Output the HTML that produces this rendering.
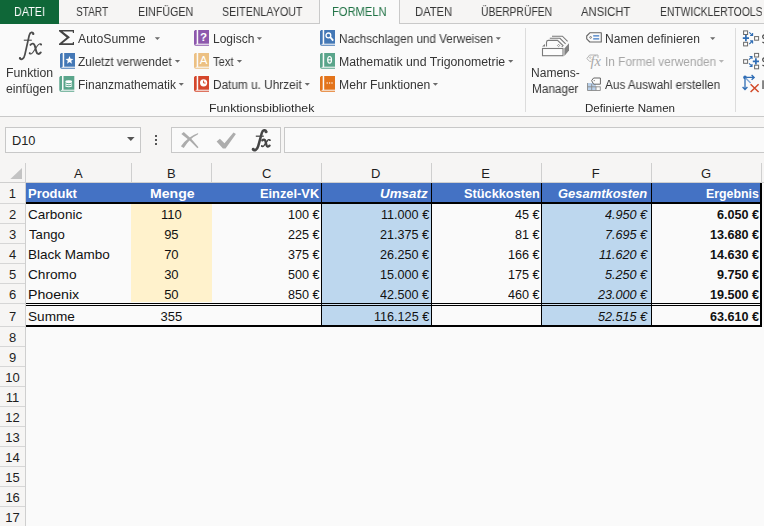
<!DOCTYPE html>
<html><head><meta charset="utf-8"><title>Excel</title>
<style>
html,body{margin:0;padding:0;}
body{width:764px;height:526px;overflow:hidden;background:#f6f5f4;position:relative;font-family:"Liberation Sans",sans-serif;}
.b{position:absolute;}
.t{position:absolute;white-space:nowrap;transform-origin:0 0;}
svg{position:absolute;left:0;top:0;}
</style></head><body>
<div class="b" style="left:0px;top:0px;width:764px;height:23px;background:#f6f5f4;"></div>
<div class="b" style="left:0px;top:23px;width:764px;height:1px;background:#c9c9c9;"></div>
<div class="b" style="left:0px;top:24px;width:764px;height:92px;background:#fafafa;"></div>
<div class="b" style="left:0px;top:116px;width:764px;height:1px;background:#c9c9c9;"></div>
<div class="b" style="left:0px;top:0px;width:59px;height:24px;background:#0f6738;"></div>
<div class="b" style="left:319px;top:0px;width:81px;height:24px;background:#fafafa;border-left:1px solid #c9c9c9;border-right:1px solid #c9c9c9;box-sizing:border-box;"></div>
<div class="b" style="left:525px;top:28px;width:1px;height:84px;background:#dcdcdc;"></div>
<div class="b" style="left:735px;top:28px;width:1px;height:84px;background:#dcdcdc;"></div>
<div class="b" style="left:5px;top:127px;width:136px;height:26px;background:#fafafa;border:1px solid #c8c8c8;box-sizing:border-box;"></div>
<div class="b" style="left:171px;top:127px;width:110px;height:26px;background:#fafafa;border:1px solid #c8c8c8;box-sizing:border-box;"></div>
<div class="b" style="left:284px;top:127px;width:490px;height:26px;background:#fafafa;border:1px solid #c8c8c8;box-sizing:border-box;"></div>
<div class="b" style="left:155px;top:135px;width:2px;height:2px;background:#555;"></div>
<div class="b" style="left:155px;top:139px;width:2px;height:2px;background:#555;"></div>
<div class="b" style="left:155px;top:143px;width:2px;height:2px;background:#555;"></div>
<div class="b" style="left:26px;top:183px;width:738px;height:343px;background:#fafafa;"></div>
<div class="b" style="left:25px;top:163px;width:1px;height:20px;background:#cfcfcf;"></div>
<div class="b" style="left:131px;top:163px;width:1px;height:20px;background:#cfcfcf;"></div>
<div class="b" style="left:211px;top:163px;width:1px;height:20px;background:#cfcfcf;"></div>
<div class="b" style="left:321px;top:163px;width:1px;height:20px;background:#cfcfcf;"></div>
<div class="b" style="left:431px;top:163px;width:1px;height:20px;background:#cfcfcf;"></div>
<div class="b" style="left:541px;top:163px;width:1px;height:20px;background:#cfcfcf;"></div>
<div class="b" style="left:651px;top:163px;width:1px;height:20px;background:#cfcfcf;"></div>
<div class="b" style="left:761px;top:163px;width:1px;height:20px;background:#cfcfcf;"></div>
<div class="b" style="left:0px;top:182px;width:764px;height:1px;background:#cfcfcf;"></div>
<div class="b" style="left:25px;top:183px;width:1px;height:343px;background:#cfcfcf;"></div>
<div class="b" style="left:0px;top:203px;width:25px;height:1px;background:#d6d6d6;"></div>
<div class="b" style="left:0px;top:223px;width:25px;height:1px;background:#d6d6d6;"></div>
<div class="b" style="left:0px;top:243px;width:25px;height:1px;background:#d6d6d6;"></div>
<div class="b" style="left:0px;top:263px;width:25px;height:1px;background:#d6d6d6;"></div>
<div class="b" style="left:0px;top:283px;width:25px;height:1px;background:#d6d6d6;"></div>
<div class="b" style="left:0px;top:303px;width:25px;height:1px;background:#d6d6d6;"></div>
<div class="b" style="left:0px;top:326px;width:25px;height:1px;background:#d6d6d6;"></div>
<div class="b" style="left:0px;top:346px;width:25px;height:1px;background:#d6d6d6;"></div>
<div class="b" style="left:0px;top:366px;width:25px;height:1px;background:#d6d6d6;"></div>
<div class="b" style="left:0px;top:386px;width:25px;height:1px;background:#d6d6d6;"></div>
<div class="b" style="left:0px;top:406px;width:25px;height:1px;background:#d6d6d6;"></div>
<div class="b" style="left:0px;top:426px;width:25px;height:1px;background:#d6d6d6;"></div>
<div class="b" style="left:0px;top:446px;width:25px;height:1px;background:#d6d6d6;"></div>
<div class="b" style="left:0px;top:466px;width:25px;height:1px;background:#d6d6d6;"></div>
<div class="b" style="left:0px;top:486px;width:25px;height:1px;background:#d6d6d6;"></div>
<div class="b" style="left:0px;top:506px;width:25px;height:1px;background:#d6d6d6;"></div>
<div class="b" style="left:0px;top:526px;width:25px;height:1px;background:#d6d6d6;"></div>
<div class="b" style="left:26px;top:183px;width:734px;height:19px;background:#4472c4;"></div>
<div class="b" style="left:131px;top:204px;width:81px;height:98px;background:#fff2cc;"></div>
<div class="b" style="left:321px;top:204px;width:110px;height:121px;background:#bdd7ee;"></div>
<div class="b" style="left:541px;top:204px;width:110px;height:121px;background:#bdd7ee;"></div>
<div class="b" style="left:26px;top:202px;width:736px;height:2px;background:#000;"></div>
<div class="b" style="left:26px;top:302.8px;width:736px;height:1px;background:#000;"></div>
<div class="b" style="left:26px;top:303.8px;width:736px;height:1.2px;background:#fafafa;"></div>
<div class="b" style="left:322px;top:303.8px;width:109px;height:1.2px;background:#cde0f2;"></div>
<div class="b" style="left:542px;top:303.8px;width:109px;height:1.2px;background:#cde0f2;"></div>
<div class="b" style="left:26px;top:305px;width:736px;height:1px;background:#000;"></div>
<div class="b" style="left:26px;top:325px;width:736px;height:2px;background:#000;"></div>
<div class="b" style="left:321px;top:183px;width:1px;height:143px;background:#000;"></div>
<div class="b" style="left:431px;top:183px;width:1px;height:143px;background:#000;"></div>
<div class="b" style="left:541px;top:183px;width:1px;height:143px;background:#000;"></div>
<div class="b" style="left:651px;top:183px;width:1px;height:143px;background:#000;"></div>
<div class="b" style="left:760px;top:183px;width:2px;height:144px;background:#000;"></div>
<svg width="764" height="526" viewBox="0 0 764 526">
<path fill="#444" d="M59 30H74V33H72.8V31.4H62.6L70 37.3L62.6 43.3H72.8V42H74V45H59V43.7L66.6 37.4L59 31.2Z"/>
<path fill="#6a6a6a" d="M154.8 37.2h5.2l-2.6 2.8z"/>
<path fill="#6a6a6a" d="M174.9 60h5.2l-2.6 2.8z"/>
<path fill="#6a6a6a" d="M178.7 83h5.2l-2.6 2.8z"/>
<path fill="#6a6a6a" d="M256.8 37.2h5.2l-2.6 2.8z"/>
<path fill="#6a6a6a" d="M236.9 60h5.2l-2.6 2.8z"/>
<path fill="#6a6a6a" d="M304.7 83h5.2l-2.6 2.8z"/>
<path fill="#6a6a6a" d="M495.7 37.2h5.2l-2.6 2.8z"/>
<path fill="#6a6a6a" d="M508.1 60h5.2l-2.6 2.8z"/>
<path fill="#6a6a6a" d="M432.8 83h5.2l-2.6 2.8z"/>
<path fill="#6a6a6a" d="M710.1 37.2h5.2l-2.6 2.8z"/>
<path fill="#b5b5b5" d="M718.8 60h5.2l-2.6 2.8z"/>
<path fill="#555" d="M127 137h7.6l-3.8 3.9z"/>
<g transform="translate(60 53)">
<path fill="#4478b6" d="M0 1.2L1.1 0H2.7V13.8Q1.4 13.9 1.4 14.8H15V15.8H1.7Q0 15.7 0 13.8Z"/>
<rect fill="#4478b6" x="4.2" y="0" width="10.8" height="13.7"/>
<path fill="#fff" d="M9.5 3.1l1.05 2.75 2.95.15-2.3 1.85.78 2.85L9.5 9.1l-2.48 1.6.78-2.85L5.5 6l2.95-.15z"/>
</g>
<g transform="translate(59.3 76)">
<path fill="#5aa58b" d="M0 1.2L1.1 0H2.7V13.8Q1.4 13.9 1.4 14.8H15V15.8H1.7Q0 15.7 0 13.8Z"/>
<rect fill="#5aa58b" x="4.2" y="0" width="10.8" height="13.7"/>
<ellipse fill="#fff" cx="9.4" cy="5.7" rx="3.4" ry="1.45"/><path fill="none" stroke="#fff" stroke-width="1.1" d="M6 7.7q3.4 2.1 6.8 0M6 9.7q3.4 2.1 6.8 0"/>
</g>
<g transform="translate(194 30)">
<path fill="#8d58ad" d="M0 1.2L1.1 0H2.7V13.8Q1.4 13.9 1.4 14.8H15V15.8H1.7Q0 15.7 0 13.8Z"/>
<rect fill="#8d58ad" x="4.2" y="0" width="10.8" height="13.7"/>
<text x="9.6" y="11" font-family="Liberation Sans" font-weight="bold" font-size="11.5" fill="#fff" text-anchor="middle">?</text>
</g>
<g transform="translate(194 53)">
<path fill="#ecc083" d="M0 1.2L1.1 0H2.7V13.8Q1.4 13.9 1.4 14.8H15V15.8H1.7Q0 15.7 0 13.8Z"/>
<rect fill="#ecc083" x="4.2" y="0" width="10.8" height="13.7"/>
<text x="9.6" y="11" font-family="Liberation Sans" font-size="11.5" fill="#fff" text-anchor="middle">A</text>
</g>
<g transform="translate(194 76)">
<path fill="#d5472c" d="M0 1.2L1.1 0H2.7V13.8Q1.4 13.9 1.4 14.8H15V15.8H1.7Q0 15.7 0 13.8Z"/>
<rect fill="#d5472c" x="4.2" y="0" width="10.8" height="13.7"/>
<circle fill="#fff" cx="9.6" cy="6.8" r="3.6"/><path fill="none" stroke="#d24a2a" stroke-width="1" d="M9.6 4.6V7H11.6"/>
</g>
<g transform="translate(320 30)">
<path fill="#4478b6" d="M0 1.2L1.1 0H2.7V13.8Q1.4 13.9 1.4 14.8H15V15.8H1.7Q0 15.7 0 13.8Z"/>
<rect fill="#4478b6" x="4.2" y="0" width="10.8" height="13.7"/>
<circle cx="8.4" cy="5.4" r="2.4" fill="none" stroke="#fff" stroke-width="1.3"/><path stroke="#fff" stroke-width="1.8" d="M10.2 7.2L13.2 10.6"/>
</g>
<g transform="translate(320 53)">
<path fill="#5aa58b" d="M0 1.2L1.1 0H2.7V13.8Q1.4 13.9 1.4 14.8H15V15.8H1.7Q0 15.7 0 13.8Z"/>
<rect fill="#5aa58b" x="4.2" y="0" width="10.8" height="13.7"/>
<ellipse cx="9.6" cy="6.8" rx="1.9" ry="3.3" fill="none" stroke="#fff" stroke-width="1.2"/><path stroke="#fff" stroke-width="1.1" d="M7.8 6.8H11.4"/>
</g>
<g transform="translate(320 76)">
<path fill="#e3741b" d="M0 1.2L1.1 0H2.7V13.8Q1.4 13.9 1.4 14.8H15V15.8H1.7Q0 15.7 0 13.8Z"/>
<rect fill="#e3741b" x="4.2" y="0" width="10.8" height="13.7"/>
<rect fill="#fff" x="6.6" y="6.4" width="1.2" height="1.2"/><rect fill="#fff" x="9" y="6.4" width="1.2" height="1.2"/><rect fill="#fff" x="11.4" y="6.4" width="1.2" height="1.2"/>
</g>
<g fill="none" stroke="#7a7a7a" stroke-width="1.1">
<rect x="542.5" y="48.5" width="20.5" height="7.2" fill="#fdfdfd"/>
<path d="M546.5 46.6V42.2Q546.6 40.4 548.4 40.4H557.5L563 45.6L561.8 46.8"/>
<path d="M549.8 38.3H560L565.6 43.8"/>
<path d="M552 36.2H562.4L567.6 41.4"/>
<path d="M558.6 44.3L559.8 45.5L558.6 46.7L557.4 45.5Z" stroke-width="0.8"/>
</g>
<path fill="#828282" d="M564.4 48.6L569 43.2V50.4L564.4 56Z"/>
<path fill="#7a7a7a" d="M542 46.6L545 44V46.6Z"/>
<g fill="none" stroke="#666" stroke-width="1.1" stroke-linejoin="round">
<path d="M586.7 36L589.8 32.8H601.3V42H589.8L586.7 38.8Z"/>
<circle cx="590.6" cy="37.4" r="0.9" stroke-width="0.8"/>
</g>
<path stroke="#3c78c3" stroke-width="1.1" d="M593.2 35.9H599.2M593.2 38.9H599.2"/>
<g fill="none" stroke="#b4b4b4" stroke-width="1" stroke-linejoin="round">
<path d="M591.5 61.3H589.6L586.8 58.6L589.6 55H598V58"/>
<circle cx="590.2" cy="57.6" r="0.8" stroke-width="0.7"/>
</g>
<text x="590.6" y="65.6" font-family="Liberation Serif" font-style="italic" font-size="14.5" fill="#a8a8a8">fx</text>
<rect x="587.5" y="83" width="8.4" height="7.5" fill="#b9d0ea"/>
<path fill="none" stroke="#8a8a8a" stroke-width="0.9" d="M587.5 83V90.5H600.3V86.6M587.5 86.8H600.3M591.7 84V90.5M596 86.6V90.5"/>
<path fill="#fdfdfd" stroke="#666" stroke-width="1" stroke-linejoin="round" d="M591.6 80.6L593.6 78H600.4V84.2H593.6Z"/>
<circle cx="594.2" cy="80.6" r="0.6" fill="#666"/>
<rect x="743.6" y="30.9" width="4" height="3.6" fill="#fdfdfd" stroke="#6a6a6a" stroke-width="1"/>
<rect x="743.6" y="42.3" width="4" height="3.6" fill="#fdfdfd" stroke="#6a6a6a" stroke-width="1"/>
<rect x="754.6" y="36.6" width="4" height="3.6" fill="#fdfdfd" stroke="#6a6a6a" stroke-width="1"/>
<path stroke="#2f6db5" stroke-width="1.7" d="M742.8 38.2H749M745.9 35.1V41.3"/>
<path fill="none" stroke="#2f6db5" stroke-width="1.1" d="M749.3 32.4L752.4 35.3M752.6 33V35.5H750.1M749.3 44L752.4 41.1M752.6 43.4V40.9H750.1"/>
<rect x="743.6" y="59.7" width="4" height="3.6" fill="#fdfdfd" stroke="#6a6a6a" stroke-width="1"/>
<rect x="754.6" y="53.4" width="4" height="3.6" fill="#fdfdfd" stroke="#6a6a6a" stroke-width="1"/>
<rect x="754.6" y="65.2" width="4" height="3.6" fill="#fdfdfd" stroke="#6a6a6a" stroke-width="1"/>
<path stroke="#2f6db5" stroke-width="1.7" d="M752.8 61.4H759M755.9 58.3V64.5"/>
<path fill="none" stroke="#2f6db5" stroke-width="1.1" d="M749 59.6L751.8 56.8M749.6 56.5H752V58.9M749 63.4L751.8 66.2M749.6 66.5H752V64.1"/>
<circle cx="745" cy="77.4" r="1.8" fill="#2f6db5"/>
<path fill="none" stroke="#2f6db5" stroke-width="1.3" d="M745 77.4H754M751.6 75L754.2 77.4L751.6 79.8M745 77.4V89.4M742.6 87L745 89.6L747.4 87"/>
<path stroke="#7fa6d4" stroke-width="1.3" d="M745.6 78L750.6 83"/>
<path stroke="#d24a2a" stroke-width="1.5" d="M750.6 84.2L758.6 92M758.6 84.2L750.6 92"/>
<path fill="none" stroke="#444" stroke-width="1.25" d="M764.5 34.800000000000004Q762.7 34.9 762.7 36.7Q762.7 38.2 764.5 38.9M762.5 41.9Q763.2 42.8 764.5 42.900000000000006"/>
<path fill="none" stroke="#444" stroke-width="1.25" d="M764.5 57.800000000000004Q762.7 57.9 762.7 59.7Q762.7 61.2 764.5 61.9M762.5 64.9Q763.2 65.8 764.5 65.9"/>
<rect x="762.4" y="80.3" width="1.25" height="8.7" fill="#444"/>
<path fill="#acacac" d="M181.3 133.9L183.8 131.9Q191.8 138.3 198.5 147.2L197.4 148.2Q189.8 139.8 181.3 133.9Z"/>
<path fill="#acacac" d="M198.3 133.1L197.8 134.5Q189.8 138.2 183.7 148L180.9 146.2Q187.8 136.8 198.3 133.1Z"/>
<path fill="#adadad" d="M216.6 141.6L219.9 138.8L224.5 143.2L233.5 132.5L235.9 134L225.6 148.6H222.9Z"/>
<path fill="none" stroke="#444" stroke-width="2.5" stroke-linecap="round" d="M266.2 131.6C265.6 129.8 262.8 129.6 261.8 133L258.2 146.2C257.2 150 254.4 151.2 253 149.4"/>
<circle cx="266" cy="131.9" r="1.45" fill="#4a4a4a"/><circle cx="253.3" cy="149.1" r="1.45" fill="#4a4a4a"/>
<path stroke="#4a4a4a" stroke-width="1.3" d="M255.8 136.2H263.8"/>
<path fill="none" stroke="#444" stroke-width="2.3" stroke-linecap="round" d="M262.3 140.4C263.6 139 265 139.4 265.4 141L266.5 145.2C266.9 146.8 268.3 147.2 269.6 145.6"/>
<path fill="none" stroke="#444" stroke-width="1.35" stroke-linecap="round" d="M270 140.2C269.2 139.2 268.2 139.6 267.2 141L264.2 145.4C263.2 146.8 262.2 147 261.6 146"/>
<circle cx="269.7" cy="140.2" r="0.9" fill="#4a4a4a"/><circle cx="261.9" cy="146" r="0.9" fill="#4a4a4a"/>
<path fill="none" stroke="#4c4c4c" stroke-width="1.75" stroke-linecap="round" d="M33.4 33.8C33.2 31.8 30.2 31.4 29.2 35.4L24.9 54.6C24 58.8 21.6 60.4 19.8 58.4"/>
<circle cx="33.2" cy="33.9" r="1.1" fill="#4c4c4c"/><circle cx="20" cy="58.2" r="1.1" fill="#4c4c4c"/>
<path stroke="#4c4c4c" stroke-width="1.1" d="M23.8 40.2H31.8"/>
<path fill="none" stroke="#4c4c4c" stroke-width="1.9" stroke-linecap="round" d="M30.4 44.9C32.2 42.8 34.2 43.4 34.8 45.8L36.4 51.8C37 54.2 39 54.8 40.8 52.4"/>
<path fill="none" stroke="#4c4c4c" stroke-width="1.1" stroke-linecap="round" d="M41.4 44.6C40.2 43.2 38.8 43.8 37.4 45.8L33 52.2C31.6 54.2 30.2 54.6 29.4 53.2"/>
<circle cx="41" cy="44.6" r="1" fill="#4c4c4c"/><circle cx="29.8" cy="53.2" r="1" fill="#4c4c4c"/>
<path fill="#c3c3c3" d="M22 168V179H10.4Z"/>
</svg>
<span class="t" style="top:6.00px;font:normal 12px 'Liberation Sans';line-height:12px;color:#ffffff;left:13.96px;transform:scaleX(0.9004);will-change:transform;">DATEI</span>
<span class="t" style="top:6.00px;font:normal 12px 'Liberation Sans';line-height:12px;color:#363636;left:75.74px;transform:scaleX(0.8384);will-change:transform;">START</span>
<span class="t" style="top:6.00px;font:normal 12px 'Liberation Sans';line-height:12px;color:#363636;left:137.77px;transform:scaleX(0.8922);will-change:transform;">EINFÜGEN</span>
<span class="t" style="top:6.00px;font:normal 12px 'Liberation Sans';line-height:12px;color:#363636;left:221.70px;transform:scaleX(0.8878);will-change:transform;">SEITENLAYOUT</span>
<span class="t" style="top:6.00px;font:normal 12px 'Liberation Sans';line-height:12px;color:#217346;left:331.84px;transform:scaleX(0.9306);will-change:transform;">FORMELN</span>
<span class="t" style="top:6.00px;font:normal 12px 'Liberation Sans';line-height:12px;color:#363636;left:414.56px;transform:scaleX(0.9350);will-change:transform;">DATEN</span>
<span class="t" style="top:6.00px;font:normal 12px 'Liberation Sans';line-height:12px;color:#363636;left:480.67px;transform:scaleX(0.8589);will-change:transform;">ÜBERPRÜFEN</span>
<span class="t" style="top:6.00px;font:normal 12px 'Liberation Sans';line-height:12px;color:#363636;left:581.15px;transform:scaleX(0.9352);will-change:transform;">ANSICHT</span>
<span class="t" style="top:6.00px;font:normal 12px 'Liberation Sans';line-height:12px;color:#363636;left:659.70px;transform:scaleX(0.8613);will-change:transform;">ENTWICKLERTOOLS</span>
<span class="t" style="top:67.00px;font:normal 12px 'Liberation Sans';line-height:12px;color:#363636;left:5.83px;transform:scaleX(1.0236);will-change:transform;">Funktion</span>
<span class="t" style="top:83.00px;font:normal 12px 'Liberation Sans';line-height:12px;color:#363636;left:6.34px;transform:scaleX(1.0192);will-change:transform;">einfügen</span>
<span class="t" style="top:33.00px;font:normal 12px 'Liberation Sans';line-height:12px;color:#363636;left:77.93px;transform:scaleX(1.0223);will-change:transform;">AutoSumme</span>
<span class="t" style="top:56.00px;font:normal 12px 'Liberation Sans';line-height:12px;color:#363636;left:78.24px;transform:scaleX(0.9875);will-change:transform;">Zuletzt verwendet</span>
<span class="t" style="top:79.00px;font:normal 12px 'Liberation Sans';line-height:12px;color:#363636;left:77.89px;transform:scaleX(0.9975);will-change:transform;">Finanzmathematik</span>
<span class="t" style="top:33.00px;font:normal 12px 'Liberation Sans';line-height:12px;color:#363636;left:212.90px;transform:scaleX(0.9900);will-change:transform;">Logisch</span>
<span class="t" style="top:56.00px;font:normal 12px 'Liberation Sans';line-height:12px;color:#363636;left:213.35px;transform:scaleX(0.9287);will-change:transform;">Text</span>
<span class="t" style="top:79.00px;font:normal 12px 'Liberation Sans';line-height:12px;color:#363636;left:212.91px;transform:scaleX(0.9842);will-change:transform;">Datum u. Uhrzeit</span>
<span class="t" style="top:103.00px;font:normal 11px 'Liberation Sans';line-height:11px;color:#2a2a2a;left:208.59px;transform:scaleX(1.1181);will-change:transform;">Funktionsbibliothek</span>
<span class="t" style="top:33.00px;font:normal 12px 'Liberation Sans';line-height:12px;color:#363636;left:338.88px;transform:scaleX(0.9746);will-change:transform;">Nachschlagen und Verweisen</span>
<span class="t" style="top:56.00px;font:normal 12px 'Liberation Sans';line-height:12px;color:#363636;left:338.63px;transform:scaleX(1.0255);will-change:transform;">Mathematik und Trigonometrie</span>
<span class="t" style="top:79.00px;font:normal 12px 'Liberation Sans';line-height:12px;color:#363636;left:338.69px;transform:scaleX(1.0140);will-change:transform;">Mehr Funktionen</span>
<span class="t" style="top:67.00px;font:normal 12px 'Liberation Sans';line-height:12px;color:#363636;left:530.79px;transform:scaleX(1.0026);will-change:transform;">Namens-</span>
<span class="t" style="top:83.00px;font:normal 12px 'Liberation Sans';line-height:12px;color:#363636;left:531.88px;transform:scaleX(0.9813);will-change:transform;">Manager</span>
<span class="t" style="top:33.00px;font:normal 12px 'Liberation Sans';line-height:12px;color:#363636;left:605.07px;transform:scaleX(1.0025);will-change:transform;">Namen definieren</span>
<span class="t" style="top:56.00px;font:normal 12px 'Liberation Sans';line-height:12px;color:#a6a6a6;left:604.74px;transform:scaleX(0.9864);will-change:transform;">In Formel verwenden</span>
<span class="t" style="top:79.00px;font:normal 12px 'Liberation Sans';line-height:12px;color:#363636;left:604.84px;transform:scaleX(0.9806);will-change:transform;">Aus Auswahl erstellen</span>
<span class="t" style="top:103.00px;font:normal 11px 'Liberation Sans';line-height:11px;color:#2a2a2a;left:585.21px;transform:scaleX(1.0516);will-change:transform;">Definierte Namen</span>
<span class="t" style="top:135.00px;font:normal 12px 'Liberation Sans';line-height:12px;color:#222;left:11.87px;transform:scaleX(1.0669);">D10</span>
<span class="t" style="top:166.60px;font:normal 13px 'Liberation Sans';line-height:13px;color:#1e1e1e;left:74.09px;">A</span>
<span class="t" style="top:166.60px;font:normal 13px 'Liberation Sans';line-height:13px;color:#1e1e1e;left:166.99px;">B</span>
<span class="t" style="top:166.60px;font:normal 13px 'Liberation Sans';line-height:13px;color:#1e1e1e;left:261.92px;">C</span>
<span class="t" style="top:166.60px;font:normal 13px 'Liberation Sans';line-height:13px;color:#1e1e1e;left:371.03px;">D</span>
<span class="t" style="top:166.60px;font:normal 13px 'Liberation Sans';line-height:13px;color:#1e1e1e;left:481.31px;">E</span>
<span class="t" style="top:166.60px;font:normal 13px 'Liberation Sans';line-height:13px;color:#1e1e1e;left:591.67px;">F</span>
<span class="t" style="top:166.60px;font:normal 13px 'Liberation Sans';line-height:13px;color:#1e1e1e;left:701.02px;">G</span>
<span class="t" style="top:187.00px;font:normal 13px 'Liberation Sans';line-height:13px;color:#1e1e1e;left:8.82px;">1</span>
<span class="t" style="top:207.50px;font:normal 13px 'Liberation Sans';line-height:13px;color:#1e1e1e;left:9.02px;">2</span>
<span class="t" style="top:227.50px;font:normal 13px 'Liberation Sans';line-height:13px;color:#1e1e1e;left:8.99px;">3</span>
<span class="t" style="top:247.50px;font:normal 13px 'Liberation Sans';line-height:13px;color:#1e1e1e;left:9.09px;">4</span>
<span class="t" style="top:267.50px;font:normal 13px 'Liberation Sans';line-height:13px;color:#1e1e1e;left:8.97px;">5</span>
<span class="t" style="top:287.50px;font:normal 13px 'Liberation Sans';line-height:13px;color:#1e1e1e;left:9.03px;">6</span>
<span class="t" style="top:309.50px;font:normal 13px 'Liberation Sans';line-height:13px;color:#1e1e1e;left:9.02px;">7</span>
<span class="t" style="top:331.30px;font:normal 13px 'Liberation Sans';line-height:13px;color:#1e1e1e;left:9.03px;">8</span>
<span class="t" style="top:351.30px;font:normal 13px 'Liberation Sans';line-height:13px;color:#1e1e1e;left:9.01px;">9</span>
<span class="t" style="top:371.30px;font:normal 13px 'Liberation Sans';line-height:13px;color:#1e1e1e;left:5.24px;">10</span>
<span class="t" style="top:391.30px;font:normal 13px 'Liberation Sans';line-height:13px;color:#1e1e1e;left:5.72px;">11</span>
<span class="t" style="top:411.30px;font:normal 13px 'Liberation Sans';line-height:13px;color:#1e1e1e;left:5.22px;">12</span>
<span class="t" style="top:431.30px;font:normal 13px 'Liberation Sans';line-height:13px;color:#1e1e1e;left:5.24px;">13</span>
<span class="t" style="top:451.30px;font:normal 13px 'Liberation Sans';line-height:13px;color:#1e1e1e;left:5.17px;">14</span>
<span class="t" style="top:471.30px;font:normal 13px 'Liberation Sans';line-height:13px;color:#1e1e1e;left:5.25px;">15</span>
<span class="t" style="top:491.30px;font:normal 13px 'Liberation Sans';line-height:13px;color:#1e1e1e;left:5.38px;">16</span>
<span class="t" style="top:511.30px;font:normal 13px 'Liberation Sans';line-height:13px;color:#1e1e1e;left:5.22px;">17</span>
<span class="t" style="top:187.00px;font:bold 13px 'Liberation Sans';line-height:13px;color:#fff;left:27.79px;transform:scaleX(0.9959);">Produkt</span>
<span class="t" style="top:187.00px;font:bold 13px 'Liberation Sans';line-height:13px;color:#fff;left:149.52px;transform:scaleX(1.0825);">Menge</span>
<span class="t" style="top:187.00px;font:bold 13px 'Liberation Sans';line-height:13px;color:#fff;left:259.68px;transform:scaleX(0.9867);">Einzel-VK</span>
<span class="t" style="top:187.00px;font:italic bold 13px 'Liberation Sans';line-height:13px;color:#fff;left:379.73px;transform:scaleX(1.0288);">Umsatz</span>
<span class="t" style="top:187.00px;font:bold 13px 'Liberation Sans';line-height:13px;color:#fff;left:463.54px;transform:scaleX(0.9820);">Stückkosten</span>
<span class="t" style="top:187.00px;font:italic bold 13px 'Liberation Sans';line-height:13px;color:#fff;left:557.95px;transform:scaleX(0.9956);">Gesamtkosten</span>
<span class="t" style="top:187.00px;font:bold 13px 'Liberation Sans';line-height:13px;color:#fff;left:706.37px;transform:scaleX(0.9505);">Ergebnis</span>
<span class="t" style="top:207.70px;font:normal 13px 'Liberation Sans';line-height:13px;color:#111;left:28.06px;transform:scaleX(1.0415);">Carbonic</span>
<span class="t" style="top:227.70px;font:normal 13px 'Liberation Sans';line-height:13px;color:#111;left:28.96px;transform:scaleX(1.0121);">Tango</span>
<span class="t" style="top:247.70px;font:normal 13px 'Liberation Sans';line-height:13px;color:#111;left:27.59px;transform:scaleX(1.0395);">Black Mambo</span>
<span class="t" style="top:267.70px;font:normal 13px 'Liberation Sans';line-height:13px;color:#111;left:27.99px;transform:scaleX(1.0512);">Chromo</span>
<span class="t" style="top:287.70px;font:normal 13px 'Liberation Sans';line-height:13px;color:#111;left:27.59px;transform:scaleX(1.0896);">Phoenix</span>
<span class="t" style="top:309.70px;font:normal 13px 'Liberation Sans';line-height:13px;color:#111;left:27.84px;transform:scaleX(1.0470);">Summe</span>
<span class="t" style="top:207.70px;font:normal 13px 'Liberation Sans';line-height:13px;color:#111;left:160.90px;">110</span>
<span class="t" style="top:227.70px;font:normal 13px 'Liberation Sans';line-height:13px;color:#111;left:164.15px;">95</span>
<span class="t" style="top:247.70px;font:normal 13px 'Liberation Sans';line-height:13px;color:#111;left:164.14px;">70</span>
<span class="t" style="top:267.70px;font:normal 13px 'Liberation Sans';line-height:13px;color:#111;left:164.15px;">30</span>
<span class="t" style="top:287.70px;font:normal 13px 'Liberation Sans';line-height:13px;color:#111;left:164.13px;">50</span>
<span class="t" style="top:309.70px;font:normal 13px 'Liberation Sans';line-height:13px;color:#111;left:160.51px;">355</span>
<span class="t" style="top:207.70px;font:normal 13px 'Liberation Sans';line-height:13px;color:#111;left:287.92px;transform:scaleX(0.9700);">100 €</span>
<span class="t" style="top:227.70px;font:normal 13px 'Liberation Sans';line-height:13px;color:#111;left:287.92px;transform:scaleX(0.9700);">225 €</span>
<span class="t" style="top:247.70px;font:normal 13px 'Liberation Sans';line-height:13px;color:#111;left:287.92px;transform:scaleX(0.9700);">375 €</span>
<span class="t" style="top:267.70px;font:normal 13px 'Liberation Sans';line-height:13px;color:#111;left:287.92px;transform:scaleX(0.9700);">500 €</span>
<span class="t" style="top:287.70px;font:normal 13px 'Liberation Sans';line-height:13px;color:#111;left:287.92px;transform:scaleX(0.9700);">850 €</span>
<span class="t" style="top:207.70px;font:normal 13px 'Liberation Sans';line-height:13px;color:#111;left:381.20px;transform:scaleX(0.9700);">11.000 €</span>
<span class="t" style="top:227.70px;font:normal 13px 'Liberation Sans';line-height:13px;color:#111;left:380.43px;transform:scaleX(0.9700);">21.375 €</span>
<span class="t" style="top:247.70px;font:normal 13px 'Liberation Sans';line-height:13px;color:#111;left:380.43px;transform:scaleX(0.9700);">26.250 €</span>
<span class="t" style="top:267.70px;font:normal 13px 'Liberation Sans';line-height:13px;color:#111;left:380.43px;transform:scaleX(0.9700);">15.000 €</span>
<span class="t" style="top:287.70px;font:normal 13px 'Liberation Sans';line-height:13px;color:#111;left:380.43px;transform:scaleX(0.9700);">42.500 €</span>
<span class="t" style="top:309.70px;font:normal 13px 'Liberation Sans';line-height:13px;color:#111;left:374.19px;transform:scaleX(0.9700);">116.125 €</span>
<span class="t" style="top:207.70px;font:normal 13px 'Liberation Sans';line-height:13px;color:#111;left:515.07px;transform:scaleX(0.9700);">45 €</span>
<span class="t" style="top:227.70px;font:normal 13px 'Liberation Sans';line-height:13px;color:#111;left:515.07px;transform:scaleX(0.9700);">81 €</span>
<span class="t" style="top:247.70px;font:normal 13px 'Liberation Sans';line-height:13px;color:#111;left:507.89px;transform:scaleX(0.9700);">166 €</span>
<span class="t" style="top:267.70px;font:normal 13px 'Liberation Sans';line-height:13px;color:#111;left:507.89px;transform:scaleX(0.9700);">175 €</span>
<span class="t" style="top:287.70px;font:normal 13px 'Liberation Sans';line-height:13px;color:#111;left:507.89px;transform:scaleX(0.9700);">460 €</span>
<span class="t" style="top:207.70px;font:italic normal 13px 'Liberation Sans';line-height:13px;color:#111;left:605.12px;transform:scaleX(0.9700);">4.950 €</span>
<span class="t" style="top:227.70px;font:italic normal 13px 'Liberation Sans';line-height:13px;color:#111;left:605.12px;transform:scaleX(0.9700);">7.695 €</span>
<span class="t" style="top:247.70px;font:italic normal 13px 'Liberation Sans';line-height:13px;color:#111;left:598.91px;transform:scaleX(0.9700);">11.620 €</span>
<span class="t" style="top:267.70px;font:italic normal 13px 'Liberation Sans';line-height:13px;color:#111;left:605.12px;transform:scaleX(0.9700);">5.250 €</span>
<span class="t" style="top:287.70px;font:italic normal 13px 'Liberation Sans';line-height:13px;color:#111;left:598.33px;transform:scaleX(0.9700);">23.000 €</span>
<span class="t" style="top:309.70px;font:italic normal 13px 'Liberation Sans';line-height:13px;color:#111;left:598.33px;transform:scaleX(0.9700);">52.515 €</span>
<span class="t" style="top:207.70px;font:bold 13px 'Liberation Sans';line-height:13px;color:#111;left:717.03px;transform:scaleX(0.9700);">6.050 €</span>
<span class="t" style="top:227.70px;font:bold 13px 'Liberation Sans';line-height:13px;color:#111;left:710.24px;transform:scaleX(0.9700);">13.680 €</span>
<span class="t" style="top:247.70px;font:bold 13px 'Liberation Sans';line-height:13px;color:#111;left:710.24px;transform:scaleX(0.9700);">14.630 €</span>
<span class="t" style="top:267.70px;font:bold 13px 'Liberation Sans';line-height:13px;color:#111;left:717.03px;transform:scaleX(0.9700);">9.750 €</span>
<span class="t" style="top:287.70px;font:bold 13px 'Liberation Sans';line-height:13px;color:#111;left:710.24px;transform:scaleX(0.9700);">19.500 €</span>
<span class="t" style="top:309.70px;font:bold 13px 'Liberation Sans';line-height:13px;color:#111;left:710.24px;transform:scaleX(0.9700);">63.610 €</span>
</body></html>
